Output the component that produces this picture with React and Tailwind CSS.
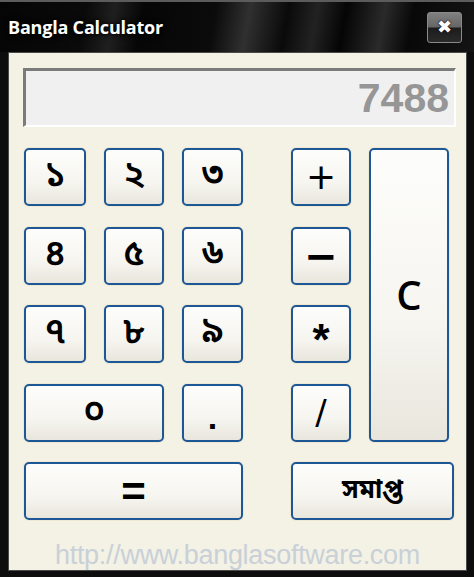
import React from 'react'

// XP-style calculator key
const Key = ({ children, className = '' }) => (
  <button
    className={`flex items-center justify-center rounded-[5px] border-2 border-[#1d5796] bg-[linear-gradient(180deg,#fdfdfb_0%,#f6f5f0_60%,#e8e6dc_100%)] text-black shadow-[0_0_0_1px_#efe8d2] ${className}`}
  >
    {children}
  </button>
)

const bn = "font-['Noto_Sans_Bengali','Lohit_Bengali','Noto_Sans','DejaVu_Sans',sans-serif]"

export default function App() {
  const digits = ['১', '২', '৩', '৪', '৫', '৬', '৭', '৮', '৯']

  return (
    <div className="flex h-[577px] w-[474px] flex-col bg-[#0d0d0d] font-['Liberation_Sans',Arial,sans-serif]">
      {/* title bar */}
      <div className="flex h-[52px] shrink-0 items-center justify-between border-t-2 border-[#5c5c5c] bg-[linear-gradient(100deg,#050505_0%,#0a0a0a_18%,#1f1f1f_24%,#060606_30%,#0b0b0b_45%,#303030_52%,#0a0a0a_60%,#222_66%,#050505_72%,#2a2a2a_80%,#080808_86%,#141414_100%)] pl-[8px] pr-[12px]">
        <span className="font-['Open_Sans',sans-serif] text-[18px] font-bold tracking-[-0.2px] text-white [text-shadow:0_0_3px_#000,0_0_6px_#000]">
          Bangla Calculator
        </span>
        <div className="flex h-[31px] w-[35px] items-center justify-center rounded-[3px] border border-[#8a8a8a] bg-[linear-gradient(180deg,#808080_0%,#666_48%,#1c1c1c_52%,#2a2a2a_100%)]">
          <span className="font-['DejaVu_Sans',sans-serif] text-[18px] font-bold leading-none text-white [text-shadow:0_0_2px_#000,0_0_1px_#000]">
            ✖
          </span>
        </div>
      </div>

      {/* window body */}
      <div className="mb-[7px] ml-[8px] mr-[7px] flex flex-1 flex-col border border-[#4a4a4a] bg-[#f3f2e5]">
        {/* display */}
        <div className="ml-[14px] mt-[15px] flex h-[59px] w-[433px] items-center justify-end border-b-2 border-l-[3px] border-r-2 border-t-[3px] border-b-[#ffffff] border-l-[#7b7b7b] border-r-[#ffffff] border-t-[#7b7b7b] bg-[#f0f0f0] pr-[5px]">
          <span className="text-[41px] font-bold leading-none text-[#969696]">7488</span>
        </div>

        {/* keypad */}
        <div className="ml-[15px] mt-[21px] grid grid-cols-[62px_60px_61px_12px_60px_80px] grid-rows-[58px_58px_58px_58px_58px] gap-x-[18px] gap-y-[20.5px]">
          {digits.slice(0, 3).map((d) => (
            <Key key={d} className={`${bn} text-[36px] font-semibold`}>{d}</Key>
          ))}
          <Key className="col-start-5 font-['DejaVu_Sans',sans-serif] text-[36px]">+</Key>
          <Key className="col-start-6 row-span-4 font-['Open_Sans',sans-serif] text-[40px] font-semibold">C</Key>

          {digits.slice(3, 6).map((d) => (
            <Key key={d} className={`${bn} text-[36px] font-semibold`}>{d}</Key>
          ))}
          <Key className="col-start-5 font-['DejaVu_Sans',sans-serif] text-[40px] font-bold">−</Key>

          {digits.slice(6, 9).map((d) => (
            <Key key={d} className={`${bn} text-[36px] font-semibold`}>{d}</Key>
          ))}
          <Key className="col-start-5 pt-[12px] text-[44px] font-bold">*</Key>

          <Key className={`col-span-2 ${bn} text-[36px] font-semibold`}>০</Key>
          <Key className="pt-[10px] text-[34px] font-bold">.</Key>
          <Key className="col-start-5 font-['DejaVu_Sans',sans-serif] text-[34px]">/</Key>

          <Key className="col-span-3 text-[42px] font-bold">=</Key>
          <Key className={`col-span-2 col-start-5 w-[163px] ${bn} text-[26px] font-bold`}>সমাপ্ত</Key>
        </div>

        <div className="mt-[20px] text-center text-[27px] leading-[30px] tracking-[-0.3px] text-[#c9d0d8]">
          http://www.banglasoftware.com
        </div>
      </div>
    </div>
  )
}
